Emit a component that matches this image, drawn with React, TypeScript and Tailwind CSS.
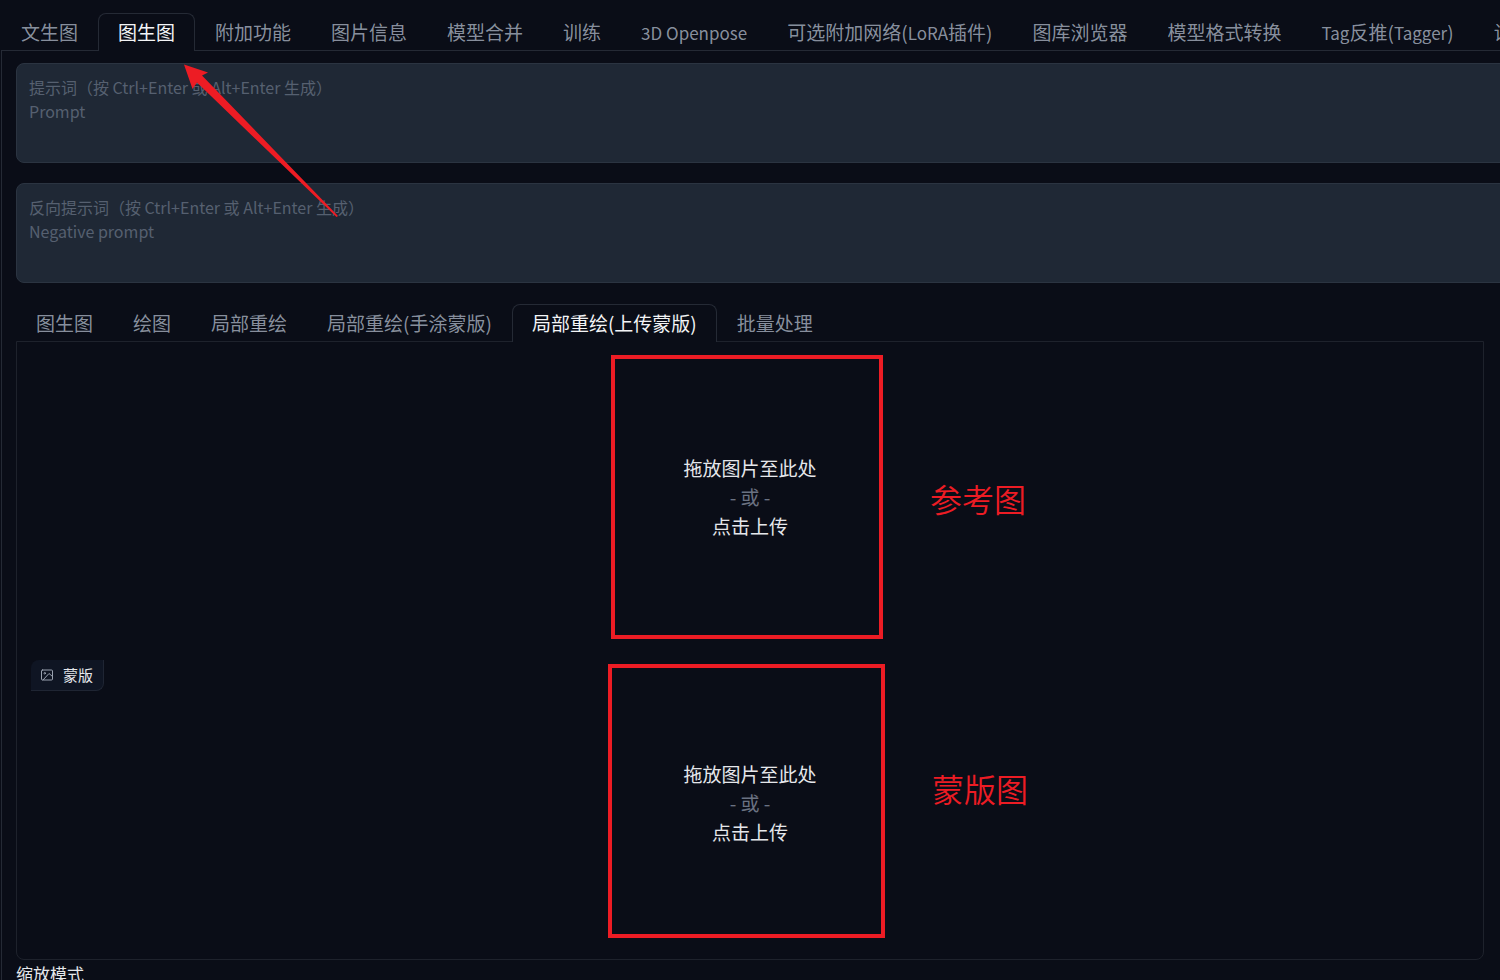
import clsx from "clsx";

type TabsProp = {
    items: string[]
    active: string
}

type UploadProp = {
    label?: string
    note: string
    frameClass: string
    noteClass: string
}

const mainTabs: string[] = [
    '文生图',
    '图生图',
    '附加功能',
    '图片信息',
    '模型合并',
    '训练',
    '3D Openpose',
    '可选附加网络(LoRA插件)',
    '图库浏览器',
    '模型格式转换',
    'Tag反推(Tagger)',
    '设置',
]

const modeTabs: string[] = [
    '图生图',
    '绘图',
    '局部重绘',
    '局部重绘(手涂蒙版)',
    '局部重绘(上传蒙版)',
    '批量处理',
]

const uploads: UploadProp[] = [
    {
        note: '参考图',
        frameClass: '-ml-[139px] top-px h-[284px] w-[272px]',
        noteClass: 'ml-[180px] top-[120px]',
    },
    {
        label: '蒙版',
        note: '蒙版图',
        frameClass: '-ml-[142px] top-1 h-[274px] w-[277px]',
        noteClass: 'ml-[182px] top-[104px]',
    },
]

// Latin words are set a little smaller than the Chinese around them
function TabLabel({ text }: { text: string }) {
    return (
        <>
            {text.split(/([A-Za-z0-9 ]+)/).map((part, index) =>
                index % 2 ? <span key={index} className="whitespace-pre text-[17px]">{part}</span> : part
            )}
        </>
    )
}

function Tabs({ items, active }: TabsProp) {
    return (
        <div role="tablist" className="relative z-10 -mb-px flex h-[38px] whitespace-nowrap">
            {items.map((item) => (
                <button
                    key={item}
                    type="button"
                    role="tab"
                    aria-selected={item === active}
                    className={clsx(
                        'shrink-0 rounded-t-lg border border-b-0 px-[19px] text-[19px] leading-7',
                        item === active
                            ? 'border-[#252a35] bg-[#0a0d17] pb-px text-gray-100'
                            : 'mb-px border-transparent text-gray-400/90'
                    )}
                >
                    <TabLabel text={item} />
                </button>
            ))}
        </div>
    )
}

function ImageIcon() {
    return (
        <svg className="h-3 w-3" viewBox="0 0 24 24" fill="none" stroke="currentColor" strokeWidth="2" strokeLinecap="round" strokeLinejoin="round">
            <rect x="1" y="2" width="22" height="20" rx="2" />
            <circle cx="7.5" cy="8.5" r="1.5" />
            <polyline points="23 15 16 9 4 22" />
        </svg>
    )
}

function Upload({ label, note, frameClass, noteClass }: UploadProp) {
    return (
        <div className="relative h-[286px]">
            <button type="button" className="flex h-full w-full flex-col items-center justify-center pb-0.5 text-[19px] leading-[29px] text-gray-200">
                <span>拖放图片至此处</span>
                <span className="text-gray-500">- 或 -</span>
                <span>点击上传</span>
            </button>
            {label && (
                <div className="absolute left-0 top-0 flex h-[31px] items-center gap-[10px] rounded-br-lg rounded-tl-lg border-b border-r border-[#1f2533] bg-[#0f1523] px-[10px] text-[15px] leading-5 text-gray-200">
                    <span className="text-gray-400"><ImageIcon /></span>
                    <span>{label}</span>
                </div>
            )}
            {/* Markup over the drop zone */}
            <div className={clsx('pointer-events-none absolute left-1/2 border-4 border-[#ed1c24]', frameClass)} />
            <div className={clsx('pointer-events-none absolute left-1/2 text-[32px] leading-12 font-[350] text-[#ed1c24]', noteClass)}>{note}</div>
        </div>
    )
}

export default function App() {
    return (
        <div className="relative h-screen overflow-hidden bg-[#0a0d17] pl-px pt-[13px] font-['Noto_Sans_CJK_SC',sans-serif]">
            <Tabs items={mainTabs} active="图生图" />
            <main className="min-h-full border-l border-t border-[#252a35] pl-[14px] pr-4 pt-3">
                {/* Prompts */}
                <div className="-mr-8 flex flex-col gap-5">
                    <textarea
                        aria-label="提示词"
                        placeholder={'提示词（按 Ctrl+Enter 或 Alt+Enter 生成）\nPrompt'}
                        className="block h-[100px] w-full resize-none rounded-lg border border-[#2b3441] bg-[#1f2835] px-3 py-[11px] text-base leading-6 text-gray-200 placeholder:text-[#566070]"
                    />
                    <textarea
                        aria-label="反向提示词"
                        placeholder={'反向提示词（按 Ctrl+Enter 或 Alt+Enter 生成）\nNegative prompt'}
                        className="block h-[100px] w-full resize-none rounded-lg border border-[#2b3441] bg-[#1f2835] px-3 py-[11px] text-base leading-6 text-gray-200 placeholder:text-[#566070]"
                    />
                </div>

                {/* Inpaint upload */}
                <div className="mt-[21px]">
                    <Tabs items={modeTabs} active="局部重绘(上传蒙版)" />
                    <div className="flex flex-col gap-5 rounded-b-lg border border-[#1e222c] px-[14px] pb-[13px] pt-3">
                        {uploads.map((item) => (
                            <Upload key={item.note} {...item} />
                        ))}
                    </div>
                </div>
                <h2 className="mt-[2px] text-[17px] leading-6 text-gray-200">缩放模式</h2>
            </main>

            {/* Arrow to the active tab */}
            <svg className="pointer-events-none absolute left-[184px] top-16 z-20 h-[153px] w-[155px]" viewBox="0 0 155 153" fill="#ed1c24">
                <polygon points="0,0.5 24,8.5 18,11.5 154,152 152.5,153 13,18.5 8.5,25" />
            </svg>
        </div>
    )
}
